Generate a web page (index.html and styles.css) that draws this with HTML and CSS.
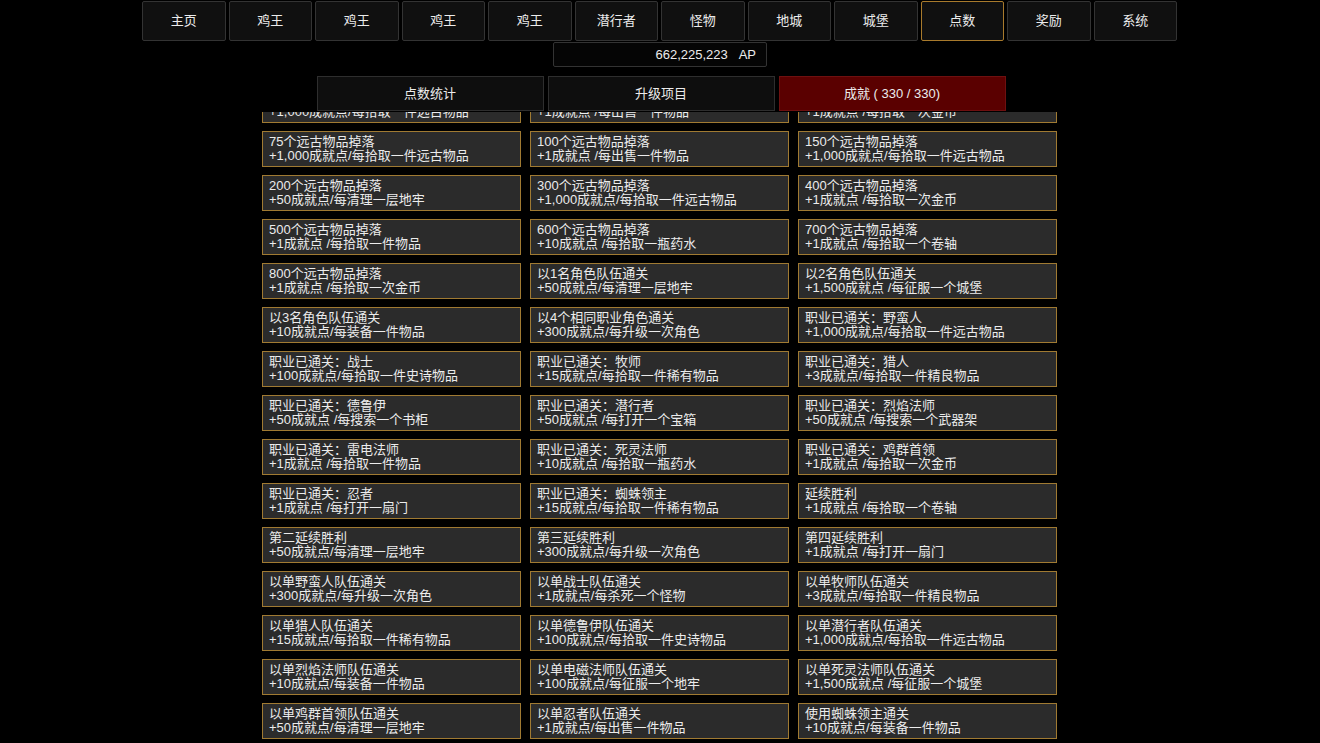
FILE: index.html
```html
<!DOCTYPE html>
<html lang="zh-CN">
<head>
  <meta charset="utf-8" />
  <title>点数 - 成就</title>
  <link rel="stylesheet" href="styles.css">
</head>
<body>

  <div class="top">
    <nav class="menu">
      <div class="menu-btn">主页</div>
      <div class="menu-btn">鸡王</div>
      <div class="menu-btn">鸡王</div>
      <div class="menu-btn">鸡王</div>
      <div class="menu-btn">鸡王</div>
      <div class="menu-btn">潜行者</div>
      <div class="menu-btn">怪物</div>
      <div class="menu-btn">地城</div>
      <div class="menu-btn">城堡</div>
      <div class="menu-btn active">点数</div>
      <div class="menu-btn">奖励</div>
      <div class="menu-btn">系统</div>
    </nav>

    <div class="points">662,225,223&nbsp;&nbsp;&nbsp;AP</div>

    <div class="tabs">
      <div class="tab">点数统计</div>
      <div class="tab">升级项目</div>
      <div class="tab selected">成就 ( 330 / 330)</div>
    </div>
  </div>

  <div class="list-wrap">
    <div id="achievements" class="achievements"></div>
  </div>

  <script>
    var achievements = [
      ["50个远古物品掉落", "+1,000成就点/每拾取一件远古物品"],
      ["60个远古物品掉落", "+1成就点 /每出售一件物品"],
      ["70个远古物品掉落", "+1成就点 /每拾取一次金币"],
      ["75个远古物品掉落", "+1,000成就点/每拾取一件远古物品"],
      ["100个远古物品掉落", "+1成就点 /每出售一件物品"],
      ["150个远古物品掉落", "+1,000成就点/每拾取一件远古物品"],
      ["200个远古物品掉落", "+50成就点/每清理一层地牢"],
      ["300个远古物品掉落", "+1,000成就点/每拾取一件远古物品"],
      ["400个远古物品掉落", "+1成就点 /每拾取一次金币"],
      ["500个远古物品掉落", "+1成就点 /每拾取一件物品"],
      ["600个远古物品掉落", "+10成就点 /每拾取一瓶药水"],
      ["700个远古物品掉落", "+1成就点 /每拾取一个卷轴"],
      ["800个远古物品掉落", "+1成就点 /每拾取一次金币"],
      ["以1名角色队伍通关", "+50成就点/每清理一层地牢"],
      ["以2名角色队伍通关", "+1,500成就点 /每征服一个城堡"],
      ["以3名角色队伍通关", "+10成就点/每装备一件物品"],
      ["以4个相同职业角色通关", "+300成就点/每升级一次角色"],
      ["职业已通关：野蛮人", "+1,000成就点/每拾取一件远古物品"],
      ["职业已通关：战士", "+100成就点/每拾取一件史诗物品"],
      ["职业已通关：牧师", "+15成就点/每拾取一件稀有物品"],
      ["职业已通关：猎人", "+3成就点/每拾取一件精良物品"],
      ["职业已通关：德鲁伊", "+50成就点 /每搜索一个书柜"],
      ["职业已通关：潜行者", "+50成就点 /每打开一个宝箱"],
      ["职业已通关：烈焰法师", "+50成就点 /每搜索一个武器架"],
      ["职业已通关：雷电法师", "+1成就点 /每拾取一件物品"],
      ["职业已通关：死灵法师", "+10成就点 /每拾取一瓶药水"],
      ["职业已通关：鸡群首领", "+1成就点 /每拾取一次金币"],
      ["职业已通关：忍者", "+1成就点 /每打开一扇门"],
      ["职业已通关：蜘蛛领主", "+15成就点/每拾取一件稀有物品"],
      ["延续胜利", "+1成就点 /每拾取一个卷轴"],
      ["第二延续胜利", "+50成就点/每清理一层地牢"],
      ["第三延续胜利", "+300成就点/每升级一次角色"],
      ["第四延续胜利", "+1成就点 /每打开一扇门"],
      ["以单野蛮人队伍通关", "+300成就点/每升级一次角色"],
      ["以单战士队伍通关", "+1成就点/每杀死一个怪物"],
      ["以单牧师队伍通关", "+3成就点/每拾取一件精良物品"],
      ["以单猎人队伍通关", "+15成就点/每拾取一件稀有物品"],
      ["以单德鲁伊队伍通关", "+100成就点/每拾取一件史诗物品"],
      ["以单潜行者队伍通关", "+1,000成就点/每拾取一件远古物品"],
      ["以单烈焰法师队伍通关", "+10成就点/每装备一件物品"],
      ["以单电磁法师队伍通关", "+100成就点/每征服一个地牢"],
      ["以单死灵法师队伍通关", "+1,500成就点 /每征服一个城堡"],
      ["以单鸡群首领队伍通关", "+50成就点/每清理一层地牢"],
      ["以单忍者队伍通关", "+1成就点/每出售一件物品"],
      ["使用蜘蛛领主通关", "+10成就点/每装备一件物品"],
      ["以单蜘蛛领主队伍通关", "+15成就点/每拾取一件稀有物品"],
      ["以单雷电法师队伍通关", "+1成就点 /每拾取一个卷轴"],
      ["以双人队伍通关", "+50成就点/每清理一层地牢"]
    ];

    function init(){
      var list = document.getElementById("achievements");
      for(var i = 0; i < achievements.length; i++){
        var card = document.createElement("div");
        card.className = "card";
        card.innerHTML = "<div>" + achievements[i][0] + "</div><div>" + achievements[i][1] + "</div>";
        list.appendChild(card);
      }
    }

    document.addEventListener("DOMContentLoaded", init);
  </script>

</body>
</html>
```

FILE: styles.css
```css
html, body {
  margin: 0;
  height: 100%;
  overflow: hidden;
  background: #000;
  color: #ececec;
  font-family: "Liberation Sans", "Noto Sans CJK SC", sans-serif;
  font-size: 13px;
}

.top {
  height: 112px;
  display: flex;
  flex-direction: column;
  align-items: center;
  position: relative;
  z-index: 2;
  background: #000;
}

.menu {
  display: flex;
  gap: 3px;
  margin-top: 1px;
  margin-right: 1px;
}

.menu-btn {
  width: 81.5px;
  height: 38px;
  line-height: 38px;
  text-align: center;
  background: #101010;
  border: 1px solid #333;
  border-radius: 2px;
}

.menu-btn.active {
  border-color: #a87a2c;
}

.points {
  width: 202px;
  height: 23px;
  line-height: 23px;
  margin-top: 1px;
  padding-right: 10px;
  text-align: right;
  background: #050505;
  border: 1px solid #333;
  border-radius: 2px;
}

.tabs {
  display: flex;
  gap: 4px;
  margin-top: 9px;
  margin-left: 2px;
}

.tab {
  width: 225px;
  height: 33px;
  line-height: 33px;
  text-align: center;
  background: #0e0e0e;
  border: 1px solid #2e2e2e;
}

.tab.selected {
  background: #5a0000;
  border-color: #6e1010;
}

.list-wrap {
  height: 631px;
  overflow: hidden;
}

.achievements {
  width: 795px;
  margin: -25px 0 0 262px;
  display: grid;
  grid-template-columns: repeat(3, 259px);
  column-gap: 9px;
  row-gap: 8px;
}

.card {
  height: 28px;
  padding: 3px 6px;
  line-height: 14px;
  background: #2b2b2b;
  border: 1px solid #a07a32;
  white-space: nowrap;
  overflow: hidden;
}
```
